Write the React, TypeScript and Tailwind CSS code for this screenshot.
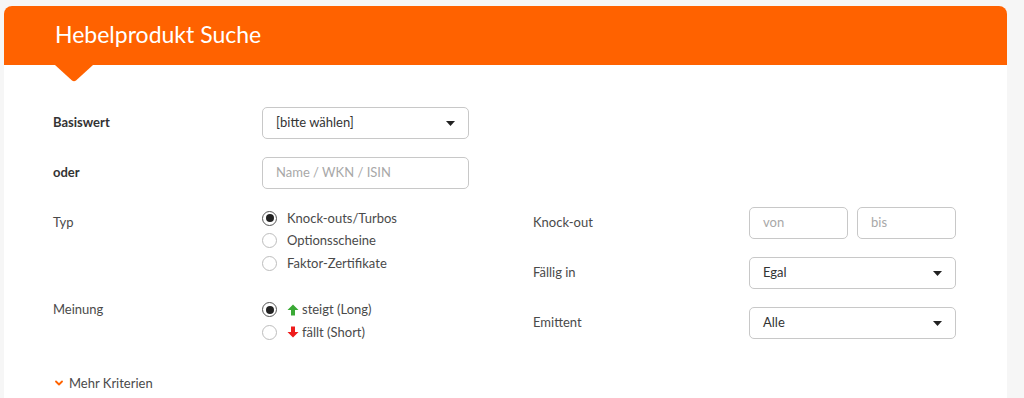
import React from 'react';

const font = { fontFamily: 'Lato, "Noto Sans", sans-serif' };

function Caret() {
  return (
    <svg width="9" height="5" viewBox="0 0 9 5" className="shrink-0">
      <path d="M0 0 H9 L4.5 5 Z" fill="#222" />
    </svg>
  );
}

function SelectBox({ value, width = 'w-[207px]' }: { value: string; width?: string }) {
  return (
    <div className={`${width} h-[32px] rounded-[5px] border border-[#c8c8c8] bg-white flex items-center justify-between pl-[13px] pr-[13px] text-[13px] text-[#333]`}>
      <span>{value}</span>
      <Caret />
    </div>
  );
}

function TextBox({ placeholder, width = 'w-[207px]' }: { placeholder: string; width?: string }) {
  return (
    <div className={`${width} h-[32px] rounded-[5px] border border-[#c8c8c8] bg-white flex items-center pl-[13px] text-[13px] text-[#a8a8a8]`}>
      {placeholder}
    </div>
  );
}

function Radio({ checked, children }: { checked?: boolean; children: React.ReactNode }) {
  return (
    <div className="h-[22.5px] flex items-center gap-[10px] text-[13px] text-[#4a4a4a]">
      <span
        className={`w-[15px] h-[15px] rounded-full border flex items-center justify-center bg-white ${
          checked ? 'border-[#555]' : 'border-[#bdbdbd]'
        }`}
      >
        {checked && <span className="w-[8px] h-[8px] rounded-full bg-[#222]" />}
      </span>
      <span className="flex items-center gap-[3px]">{children}</span>
    </div>
  );
}

function ArrowUp() {
  return (
    <svg width="12" height="12" viewBox="0 0 12 12">
      <path d="M6 0.5 L11.5 6 L8 6 L8 11.5 L4 11.5 L4 6 L0.5 6 Z" fill="#3aa935" />
    </svg>
  );
}

function ArrowDown() {
  return (
    <svg width="12" height="12" viewBox="0 0 12 12">
      <path d="M6 11.5 L11.5 6 L8 6 L8 0.5 L4 0.5 L4 6 L0.5 6 Z" fill="#ee1c1c" />
    </svg>
  );
}

export default function App() {
  return (
    <div className="w-[1024px] h-[398px] bg-[#f6f6f6] overflow-hidden pt-[6px] pl-[4px]" style={font}>
      <div className="w-[1003px] bg-white rounded-t-[8px] relative min-h-[400px]">
        {/* header */}
        <div className="h-[59px] bg-[#ff6200] rounded-t-[8px] flex items-center pl-[51px]">
          <h1 className="text-[23px] text-white font-normal leading-none pb-[2px]">Hebelprodukt Suche</h1>
        </div>
        <svg className="absolute left-[51px] top-[59px]" width="38" height="17" viewBox="0 0 38 17">
          <path d="M0 0 H38 L21 15.5 Q19 17 17 15.5 Z" fill="#ff6200" />
        </svg>

        <div className="pl-[49px] pt-[42px]">
          {/* Basiswert / oder */}
          <div className="flex items-center h-[32px]">
            <div className="w-[209px] text-[13px] font-bold text-[#333]">Basiswert</div>
            <SelectBox value="[bitte wählen]" />
          </div>
          <div className="flex items-center h-[32px] mt-[18px]">
            <div className="w-[209px] text-[13px] font-bold text-[#333]">oder</div>
            <TextBox placeholder="Name / WKN / ISIN" />
          </div>

          {/* two columns */}
          <div className="flex mt-[18px]">
            <div className="w-[480px]">
              <div className="flex">
                <div className="w-[209px] pt-[6px] text-[13px] text-[#4a4a4a]">Typ</div>
                <div className="flex flex-col">
                  <Radio checked>Knock-outs/Turbos</Radio>
                  <Radio>Optionsscheine</Radio>
                  <Radio>Faktor-Zertifikate</Radio>
                </div>
              </div>
              <div className="flex mt-[24px]">
                <div className="w-[209px] pt-[1px] text-[13px] text-[#4a4a4a]">Meinung</div>
                <div className="flex flex-col">
                  <Radio checked>
                    <ArrowUp />
                    steigt (Long)
                  </Radio>
                  <Radio>
                    <ArrowDown />
                    fällt (Short)
                  </Radio>
                </div>
              </div>
            </div>

            <div className="flex flex-col gap-[18px]">
              <div className="flex items-center h-[32px]">
                <div className="w-[216px] text-[13px] text-[#4a4a4a]">Knock-out</div>
                <div className="flex gap-[9px]">
                  <TextBox placeholder="von" width="w-[99px]" />
                  <TextBox placeholder="bis" width="w-[99px]" />
                </div>
              </div>
              <div className="flex items-center h-[32px]">
                <div className="w-[216px] text-[13px] text-[#4a4a4a]">Fällig in</div>
                <SelectBox value="Egal" />
              </div>
              <div className="flex items-center h-[32px]">
                <div className="w-[216px] text-[13px] text-[#4a4a4a]">Emittent</div>
                <SelectBox value="Alle" />
              </div>
            </div>
          </div>

          {/* Mehr Kriterien */}
          <div className="flex items-center gap-[6px] mt-[30px] pl-[2px] text-[13px] text-[#4a4a4a]">
            <svg width="8" height="6" viewBox="0 0 8 6">
              <path d="M1 1.5 L4 4.5 L7 1.5" stroke="#ff6200" strokeWidth="1.8" fill="none" strokeLinecap="round" strokeLinejoin="round" />
            </svg>
            Mehr Kriterien
          </div>
        </div>
      </div>
    </div>
  );
}
